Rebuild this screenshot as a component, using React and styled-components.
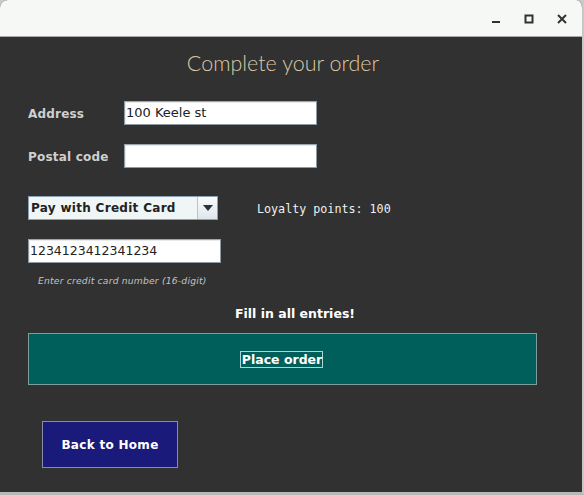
import React from "react";
import styled, { createGlobalStyle } from "styled-components";

const Global = createGlobalStyle`
  html, body {
    margin: 0;
    padding: 0;
    background: #c9c9c9;
  }
`;

const Window = styled.div`
  width: 584px;
  height: 495px;
  display: flex;
  flex-direction: column;
  box-sizing: border-box;
  border-right: 2px solid #c6c8c6;
  border-bottom: 3px solid #b8b8b8;
  border-radius: 8px 8px 0 0;
  overflow: hidden;
  background: #313131;
`;

const TitleBar = styled.div`
  height: 37px;
  flex: none;
  background: #f5f8f5;
  border-bottom: 1px solid #a9aba9;
  box-sizing: border-box;
  display: flex;
  justify-content: flex-end;
  align-items: center;
  padding-right: 4px;
`;

const WinBtn = styled.div`
  width: 33px;
  height: 24px;
  display: flex;
  align-items: center;
  justify-content: center;
  margin-top: 2px;
`;

const Content = styled.div`
  flex: 1;
  display: flex;
  flex-direction: column;
  padding: 13px 0 0 28px;
  font-family: "DejaVu Sans", sans-serif;
`;

const Title = styled.div`
  font-family: "Lato", sans-serif;
  font-weight: 300;
  font-size: 21.5px;
  line-height: 26px;
  color: #dcc9a6;
  text-align: center;
  margin-left: -28px;
  padding-right: 16px;
`;

const Row = styled.div`
  display: flex;
  align-items: center;
  margin-top: ${(p) => p.top}px;
`;

const Label = styled.div`
  width: 96px;
  font-size: 12px;
  font-weight: bold;
  color: #cfcfcf;
  letter-spacing: 0.2px;
  padding-top: 1px;
`;

const Input = styled.div`
  width: ${(p) => p.width}px;
  height: 24px;
  box-sizing: border-box;
  background: #fff;
  border: 1px solid #8e9aa3;
  border-top-color: #9aa6ae;
  box-shadow: inset 1px 1px 0 #e8ecee;
  font-size: ${(p) => p.size || 13}px;
  line-height: 22px;
  padding-left: 1px;
  color: #222;
`;

const Combo = styled.div`
  width: 190px;
  height: 24px;
  box-sizing: border-box;
  display: flex;
  border: 1px solid #8aa0b4;
  background: #f0f5f5;
`;

const ComboText = styled.div`
  flex: 1;
  font-size: 12px;
  font-weight: bold;
  color: #222;
  line-height: 22px;
  padding-left: 2px;
  letter-spacing: 0.3px;
`;

const ComboArrow = styled.div`
  width: 19px;
  border-left: 1px solid #b6c4cf;
  background: linear-gradient(#fbfcfd, #dfe6ec);
  display: flex;
  align-items: center;
  justify-content: center;
`;

const Loyalty = styled.div`
  margin-left: 39px;
  margin-top: 2px;
  font-family: "DejaVu Sans Mono", monospace;
  font-size: 11.7px;
  color: #f0f0f0;
`;

const Hint = styled.div`
  margin: 12px 0 0 10px;
  font-size: 9.2px;
  font-style: italic;
  color: #c4c4c4;
  letter-spacing: 0.2px;
`;

const Notice = styled.div`
  margin-top: 20px;
  font-size: 12.5px;
  font-weight: bold;
  color: #fff;
  text-align: center;
  width: 534px;
`;

const PlaceButton = styled.div`
  margin-top: 12px;
  width: 509px;
  height: 52px;
  box-sizing: border-box;
  background: #005f5a;
  border: 1px solid #7e9e9e;
  display: flex;
  align-items: center;
  justify-content: center;
`;

const Focused = styled.span`
  font-size: 12.5px;
  font-weight: bold;
  color: #fff;
  border: 1px solid #a9d6d3;
  padding: 0 0 0 1px;
  line-height: 15px;
  margin-left: -2px;
`;

const HomeButton = styled.div`
  margin: 36px 0 0 14px;
  width: 136px;
  height: 47px;
  box-sizing: border-box;
  background: #1a1a7a;
  border: 1px solid #8a8ca6;
  color: #fff;
  font-size: 12px;
  font-weight: bold;
  display: flex;
  align-items: center;
  justify-content: center;
  letter-spacing: 0.3px;
`;

export default function App() {
  return (
    <>
      <Global />
      <Window>
        <TitleBar>
          <WinBtn>
            <svg width="10" height="10" viewBox="0 0 10 10">
              <rect x="1" y="7" width="8" height="2" fill="#2e3436" />
            </svg>
          </WinBtn>
          <WinBtn>
            <svg width="10" height="10" viewBox="0 0 10 10">
              <rect x="1.5" y="1.5" width="7" height="7" fill="none" stroke="#2e3436" strokeWidth="2" />
            </svg>
          </WinBtn>
          <WinBtn>
            <svg width="10" height="10" viewBox="0 0 10 10">
              <path d="M1 1 L9 9 M9 1 L1 9" stroke="#2e3436" strokeWidth="2" />
            </svg>
          </WinBtn>
        </TitleBar>
        <Content>
          <Title>Complete your order</Title>
          <Row top={25}>
            <Label>Address</Label>
            <Input width={193}>100 Keele st</Input>
          </Row>
          <Row top={19}>
            <Label>Postal code</Label>
            <Input width={193} />
          </Row>
          <Row top={28}>
            <Combo>
              <ComboText>Pay with Credit Card</ComboText>
              <ComboArrow>
                <svg width="10" height="6" viewBox="0 0 10 6">
                  <path d="M0 0 H10 L5 6 Z" fill="#2e3436" />
                </svg>
              </ComboArrow>
            </Combo>
            <Loyalty>Loyalty points: 100</Loyalty>
          </Row>
          <Row top={19}>
            <Input width={193} size={12.5}>1234123412341234</Input>
          </Row>
          <Hint>Enter credit card number (16-digit)</Hint>
          <Notice>Fill in all entries!</Notice>
          <PlaceButton>
            <Focused>Place order</Focused>
          </PlaceButton>
          <HomeButton>Back to Home</HomeButton>
        </Content>
      </Window>
    </>
  );
}
